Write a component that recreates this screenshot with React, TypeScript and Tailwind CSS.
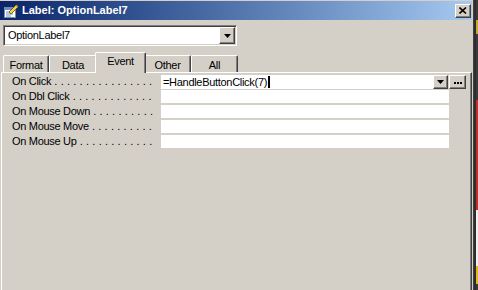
import React from "react";

const raised =
  "border border-t-white border-l-white border-r-[#404040] border-b-[#404040] shadow-[inset_-1px_-1px_0_#808080]";

const rows = [
  { label: "On Click", dots: 16 },
  { label: "On Dbl Click", dots: 13 },
  { label: "On Mouse Down", dots: 10 },
  { label: "On Mouse Move", dots: 10 },
  { label: "On Mouse Up", dots: 12 },
];

function SheetIcon() {
  return (
    <svg width="16" height="16" viewBox="0 0 16 16" className="shrink-0">
      <rect x="1.5" y="4.5" width="11" height="10" fill="#ffffff" stroke="#7a8aa0" />
      <rect x="2" y="5" width="10" height="2" fill="#6c8fc8" />
      <path d="M3 9h7M3 11h7M3 13h5" stroke="#6c8fc8" strokeWidth="1" />
      <path d="M6 9 L13 2 L15 4 L8 11 Z" fill="#f5d44a" stroke="#5a4a10" strokeWidth="0.8" />
      <path d="M13 2 L15 4" stroke="#c08020" strokeWidth="1.5" />
    </svg>
  );
}

export default function App() {
  return (
    <div className="w-[478px] h-[290px] flex bg-[#d4d0c8] overflow-hidden font-['Liberation_Sans',Arial,sans-serif] text-[11px] text-black">
      {/* window */}
      <div className="w-[474px] h-full flex flex-col pt-px border-r border-[#404040]">
        {/* title bar */}
        <div className="h-[19px] mr-px flex items-center bg-linear-to-r from-[#0a246a] to-[#a6caf0] pl-[3px] pr-[1px]">
          <SheetIcon />
          <span className="ml-[3px] text-white font-bold text-[11px] leading-none">
            Label: OptionLabel7
          </span>
          <div className={`ml-auto w-[16px] h-[14px] bg-[#d4d0c8] flex items-center justify-center ${raised}`}>
            <svg width="8" height="7" viewBox="0 0 8 7">
              <path d="M0.5 0.5 L7 6.5 M7 0.5 L0.5 6.5" stroke="#000" strokeWidth="1.6" />
            </svg>
          </div>
        </div>

        {/* object combo */}
        <div className="mt-[5px] ml-[3px] w-[234px] h-[21px] flex bg-white border border-t-[#808080] border-l-[#808080] border-b-white border-r-white shadow-[inset_1px_1px_0_#404040,inset_-1px_-1px_0_#d4d0c8] p-[1px]">
          <span className="flex-1 pl-[3px] leading-[17px] tracking-[-0.3px]">OptionLabel7</span>
          <div className={`w-[16px] h-[17px] bg-[#d4d0c8] flex items-center justify-center ${raised}`}>
            <svg width="7" height="4" viewBox="0 0 7 4">
              <path d="M0 0 H7 L3.5 4 Z" fill="#000" />
            </svg>
          </div>
        </div>

        {/* tabs */}
        <div className="mt-[6px] ml-[3px] h-[20px] flex items-end">
          {[
            { label: "Format", w: "w-[46px]" },
            { label: "Data", w: "w-[48px]" },
            { label: "Event", w: "w-[51px]", active: true },
            { label: "Other", w: "w-[47px]" },
            { label: "All", w: "w-[47px]" },
          ].map((t) =>
            t.active ? (
              <div
                key={t.label}
                className={`${t.w} -mx-[2px] h-[21px] -mb-px relative z-10 bg-[#d4d0c8] rounded-t-[2px] border-t border-l border-r border-t-white border-l-white border-r-[#404040] shadow-[inset_-1px_0_0_#808080] flex justify-center pt-[2px] leading-[13px] tracking-[-0.3px]`}
              >
                {t.label}
              </div>
            ) : (
              <div
                key={t.label}
                className={`${t.w} h-[17px] bg-[#d4d0c8] rounded-t-[2px] border-t border-l border-r border-t-white border-l-white border-r-[#404040] shadow-[inset_-1px_0_0_#808080] flex justify-center pt-[3px] leading-[13px] tracking-[-0.3px]`}
              >
                {t.label}
              </div>
            )
          )}
        </div>

        {/* panel */}
        <div className="flex-1 mx-px border-t border-l border-r border-t-white border-l-white border-r-[#404040] shadow-[inset_-1px_0_0_#808080] pt-[1px] pl-[10px]">
          {rows.map((row, i) => (
            <div key={row.label} className="h-[15px] flex items-center">
              <div className="w-[149px] flex whitespace-pre leading-[15px]">
                <span className="tracking-[-0.3px]">{row.label}</span>
                <span className="tracking-[0.1px]">{" .".repeat(row.dots)}</span>
              </div>
              {i === 0 ? (
                <div className="flex items-center h-[15px]">
                  <div className="w-[272px] h-[14px] bg-white flex items-center pl-[2px] tracking-[-0.3px] leading-[14px]">
                    =HandleButtonClick(7)
                    <span className="ml-px w-[2px] h-[12px] bg-black" />
                  </div>
                  <div className={`w-[15px] h-[14px] bg-[#d4d0c8] flex items-center justify-center ${raised}`}>
                    <svg width="7" height="4" viewBox="0 0 7 4">
                      <path d="M0 0 H7 L3.5 4 Z" fill="#000" />
                    </svg>
                  </div>
                  <div className={`ml-px w-[17px] h-[14px] bg-[#d4d0c8] flex items-end justify-center pb-[4px] ${raised}`}>
                    <svg width="8" height="2" viewBox="0 0 8 2">
                      <rect x="0" y="0" width="2" height="2" fill="#000" />
                      <rect x="3" y="0" width="2" height="2" fill="#000" />
                      <rect x="6" y="0" width="2" height="2" fill="#000" />
                    </svg>
                  </div>
                </div>
              ) : (
                <div className="w-[288px] h-[13px] bg-white" />
              )}
            </div>
          ))}
        </div>
      </div>

      {/* desktop behind the window */}
      <div className="flex-1 flex">
        <div className="w-[2px] bg-[#2e2e2e]" />
        <div className="flex-1 flex flex-col">
          <div className="h-[20px] bg-[#3a3a3a]" />
          <div className="h-[14px] bg-[#c8a830]" />
          <div className="h-[66px] bg-[#3a3a3a]" />
          <div className="h-[110px] bg-[#c0302a]" />
          <div className="h-[56px] bg-[#f0f0f0]" />
          <div className="h-[18px] bg-[#e0b820]" />
          <div className="flex-1 bg-[#3a3a3a]" />
        </div>
      </div>
    </div>
  );
}
